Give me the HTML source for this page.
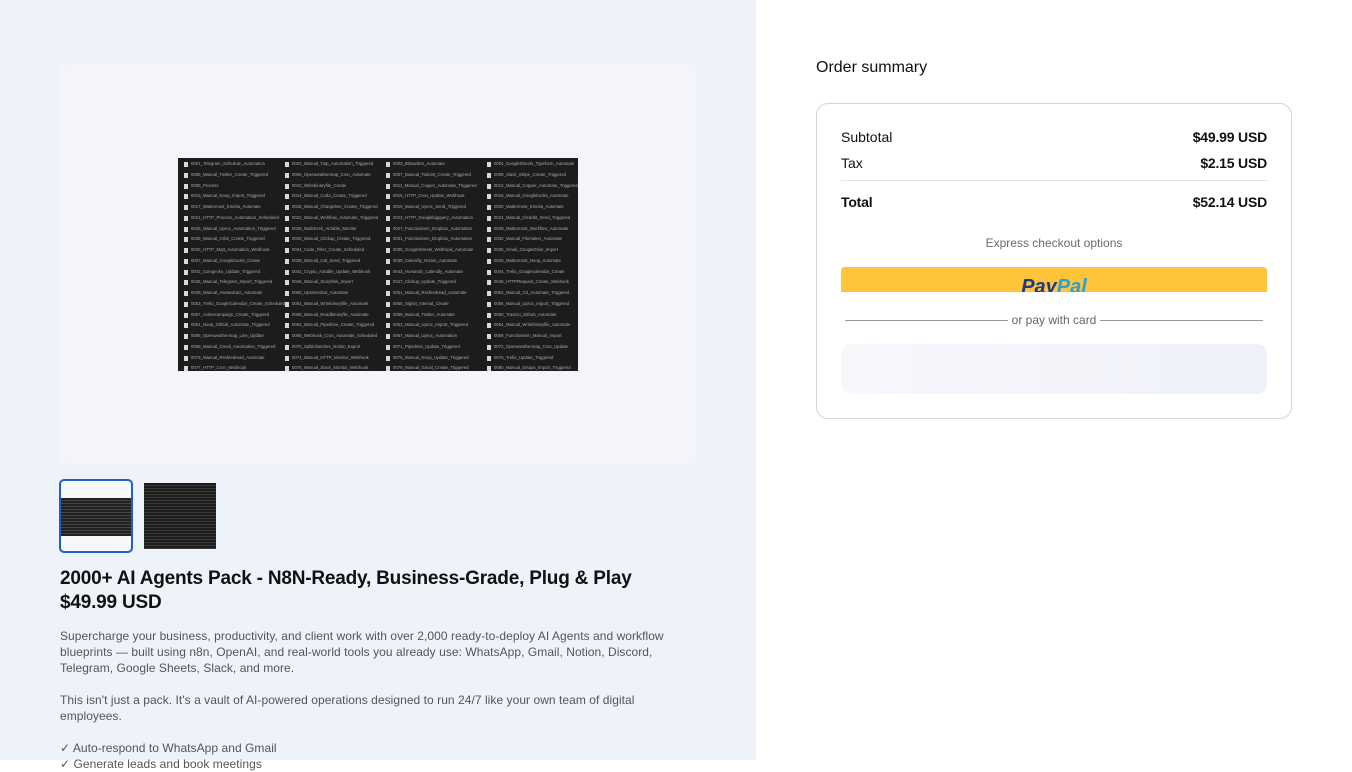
<!DOCTYPE html>
<html><head><meta charset="utf-8"><style>
*{margin:0;padding:0;box-sizing:border-box}
body{width:1352px;height:760px;overflow:hidden;font-family:"Liberation Sans",sans-serif;background:#fff;position:relative}
.left{position:absolute;left:0;top:0;width:756px;height:760px;background:#eef2f9}
.hero{position:absolute;left:60px;top:64px;width:636px;height:400px;background:#f3f5fa;border-radius:6px}
.shot{position:absolute;left:178px;top:158px;width:400px;height:213px;background:#1c1c1c;overflow:hidden;display:grid;grid-template-columns:101px 101px 101px 97px;grid-auto-rows:10.75px;padding:1px 0 0 6px}
.shot div{font-size:4.3px;color:#a8a8a8;white-space:nowrap;overflow:hidden;line-height:10.75px;padding-left:7px;position:relative}
.shot div:before{content:"";position:absolute;left:0;top:3px;width:4px;height:5px;background:#d8d8d8}
.t1{position:absolute;left:59px;top:479px;width:74px;height:74px;border:2px solid #1f5fc4;border-radius:5px;background:#f6f7fb;overflow:hidden}
.t1 i{position:absolute;left:0;top:17px;width:70px;height:38px;background:#222;background-image:repeating-linear-gradient(#222 0 2px,#444 2px 3px)}
.t2{position:absolute;left:144px;top:483px;width:72px;height:66px;background:#1c1c1c;background-image:repeating-linear-gradient(#1c1c1c 0 2px,#3a3a3a 2px 3px)}
h1{position:absolute;left:60px;top:567px;font-size:19px;font-weight:700;color:#111;line-height:24px;letter-spacing:-.2px}
.desc{position:absolute;left:60px;top:628px;width:625px;font-size:12px;line-height:16px;color:#555;letter-spacing:.05px}
.desc p{margin-bottom:16px}
h2{position:absolute;left:816px;top:59px;font-size:16px;font-weight:500;color:#111}
.card{position:absolute;left:816px;top:103px;width:476px;height:316px;border:1px solid #d4d4d4;border-radius:12px}
.row{position:absolute;left:24px;right:24px;display:flex;justify-content:space-between;font-size:14px;color:#111}
.row b{font-weight:700;letter-spacing:-.2px}
.sep{position:absolute;left:24px;right:24px;top:76px;height:1px;background:#e3e3e3}
.exp{position:absolute;left:0;right:0;top:132px;text-align:center;font-size:12px;color:#6b6b6b}
.pp{position:absolute;left:24px;right:24px;top:163px;height:25px;background:#ffc43a;border-radius:4px 4px 0 0;overflow:hidden;text-align:center}
.pp span{font-size:20px;font-weight:700;font-style:italic;position:relative;top:10px;line-height:20px}
.or{position:absolute;left:28px;right:28px;top:209px;display:flex;align-items:center;font-size:12px;color:#666}
.or i{flex:1;height:1px;background:#999}
.or span{padding:0 4px}
.field{position:absolute;left:24px;right:24px;top:240px;height:50px;border-radius:10px;background:linear-gradient(90deg,#f7f8fc,#eef1f8)}
</style></head><body>
<div class="left">
<div class="hero"></div>
<div class="shot">
<div>0001_Telegram_Schedule_Automation</div><div>0002_Manual_Totp_Automation_Triggered</div><div>0003_Bitwarden_Automate</div><div>0004_GoogleSheets_Typeform_Automate</div>
<div>0005_Manual_Twitter_Create_Triggered</div><div>0006_Openweathermap_Cron_Automate</div><div>0007_Manual_Todoist_Create_Triggered</div><div>0008_Slack_Stripe_Create_Triggered</div>
<div>0009_Process</div><div>0010_Writebinaryfile_Create</div><div>0011_Manual_Copper_Automate_Triggered</div><div>0012_Manual_Copper_Automate_Triggered</div>
<div>0013_Manual_Noop_Import_Triggered</div><div>0014_Manual_Coda_Create_Triggered</div><div>0015_HTTP_Cron_Update_Webhook</div><div>0016_Manual_Googlebooks_Automate</div>
<div>0017_Mattermost_Emelia_Automate</div><div>0018_Manual_Chargebee_Create_Triggered</div><div>0019_Manual_Uproc_Send_Triggered</div><div>0020_Mattermost_Emelia_Automate</div>
<div>0021_HTTP_Process_Automation_Scheduled</div><div>0022_Manual_Webflow_Automate_Triggered</div><div>0023_HTTP_Googlebigquery_Automation</div><div>0024_Manual_Clearbit_Send_Triggered</div>
<div>0025_Manual_Uproc_Automation_Triggered</div><div>0026_Mailcheck_Airtable_Monitor</div><div>0027_Functionitem_Dropbox_Automation</div><div>0028_Mattermost_Workflow_Automate</div>
<div>0029_Manual_Orbit_Create_Triggered</div><div>0030_Manual_Clickup_Create_Triggered</div><div>0031_Functionitem_Dropbox_Automation</div><div>0032_Manual_Filemaker_Automate</div>
<div>0033_HTTP_Mqtt_Automation_Webhook</div><div>0034_Code_Filter_Create_Scheduled</div><div>0035_GoogleSheets_Webhook_Automate</div><div>0036_Gmail_GoogleDrive_Import</div>
<div>0037_Manual_Googlebooks_Create</div><div>0038_Manual_Ical_Send_Triggered</div><div>0039_Calendly_Notion_Automate</div><div>0040_Mattermost_Noop_Automate</div>
<div>0041_Coingecko_Update_Triggered</div><div>0042_Crypto_Airtable_Update_Webhook</div><div>0043_Humantic_Calendly_Automate</div><div>0044_Trello_Googlecalendar_Create</div>
<div>0045_Manual_Telegram_Import_Triggered</div><div>0046_Manual_Storyblok_Import</div><div>0047_Clickup_Update_Triggered</div><div>0048_HTTPRequest_Create_Webhook</div>
<div>0049_Manual_Awstextract_Automate</div><div>0050_Uptimerobot_Automate</div><div>0051_Manual_Rssfeedread_Automate</div><div>0052_Manual_Git_Automate_Triggered</div>
<div>0053_Trello_GoogleCalendar_Create_Scheduled</div><div>0054_Manual_Writebinaryfile_Automate</div><div>0055_Signl4_Interval_Create</div><div>0056_Manual_Uproc_Import_Triggered</div>
<div>0057_Activecampaign_Create_Triggered</div><div>0058_Manual_Readbinaryfile_Automate</div><div>0059_Manual_Twitter_Automate</div><div>0060_Travisci_Github_Automate</div>
<div>0061_Noop_Github_Automate_Triggered</div><div>0062_Manual_Pipedrive_Create_Triggered</div><div>0063_Manual_Uproc_Import_Triggered</div><div>0064_Manual_Writebinaryfile_Automate</div>
<div>0065_Openweathermap_Line_Update</div><div>0066_Webhook_Cron_Automate_Scheduled</div><div>0067_Manual_Uproc_Automation</div><div>0068_Functionitem_Manual_Import</div>
<div>0069_Manual_Gmail_Automation_Triggered</div><div>0070_Splitinbatches_Notion_Export</div><div>0071_Pipedrive_Update_Triggered</div><div>0072_Openweathermap_Cron_Update</div>
<div>0073_Manual_Rssfeedread_Automate</div><div>0074_Manual_HTTP_Monitor_Webhook</div><div>0075_Manual_Noop_Update_Triggered</div><div>0076_Trello_Update_Triggered</div>
<div>0077_HTTP_Cron_Webhook</div><div>0078_Manual_Slack_Monitor_Webhook</div><div>0079_Manual_Gmail_Create_Triggered</div><div>0080_Manual_Disqus_Import_Triggered</div>
</div>
<div class="t1"><i></i></div>
<div class="t2"></div>
<h1>2000+ AI Agents Pack - N8N-Ready, Business-Grade, Plug &amp; Play<br>$49.99 USD</h1>
<div class="desc">
<p>Supercharge your business, productivity, and client work with over 2,000 ready-to-deploy AI Agents and workflow blueprints — built using n8n, OpenAI, and real-world tools you already use: WhatsApp, Gmail, Notion, Discord, Telegram, Google Sheets, Slack, and more.</p>
<p>This isn't just a pack. It's a vault of AI-powered operations designed to run 24/7 like your own team of digital employees.</p>
<p style="margin:0">✓ Auto-respond to WhatsApp and Gmail<br>✓ Generate leads and book meetings</p>
</div>
</div>
<h2>Order summary</h2>
<div class="card">
<div class="row" style="top:25px"><span>Subtotal</span><b>$49.99 USD</b></div>
<div class="row" style="top:51px"><span>Tax</span><b>$2.15 USD</b></div>
<div class="sep"></div>
<div class="row" style="top:90px"><b>Total</b><b>$52.14 USD</b></div>
<div class="exp">Express checkout options</div>
<div class="pp"><span style="color:#1b3a8a">Pay</span><span style="color:#2a9fd8">Pal</span></div>
<div class="or"><i></i><span>or pay with card</span><i></i></div>
<div class="field"></div>
</div>
</body></html>
